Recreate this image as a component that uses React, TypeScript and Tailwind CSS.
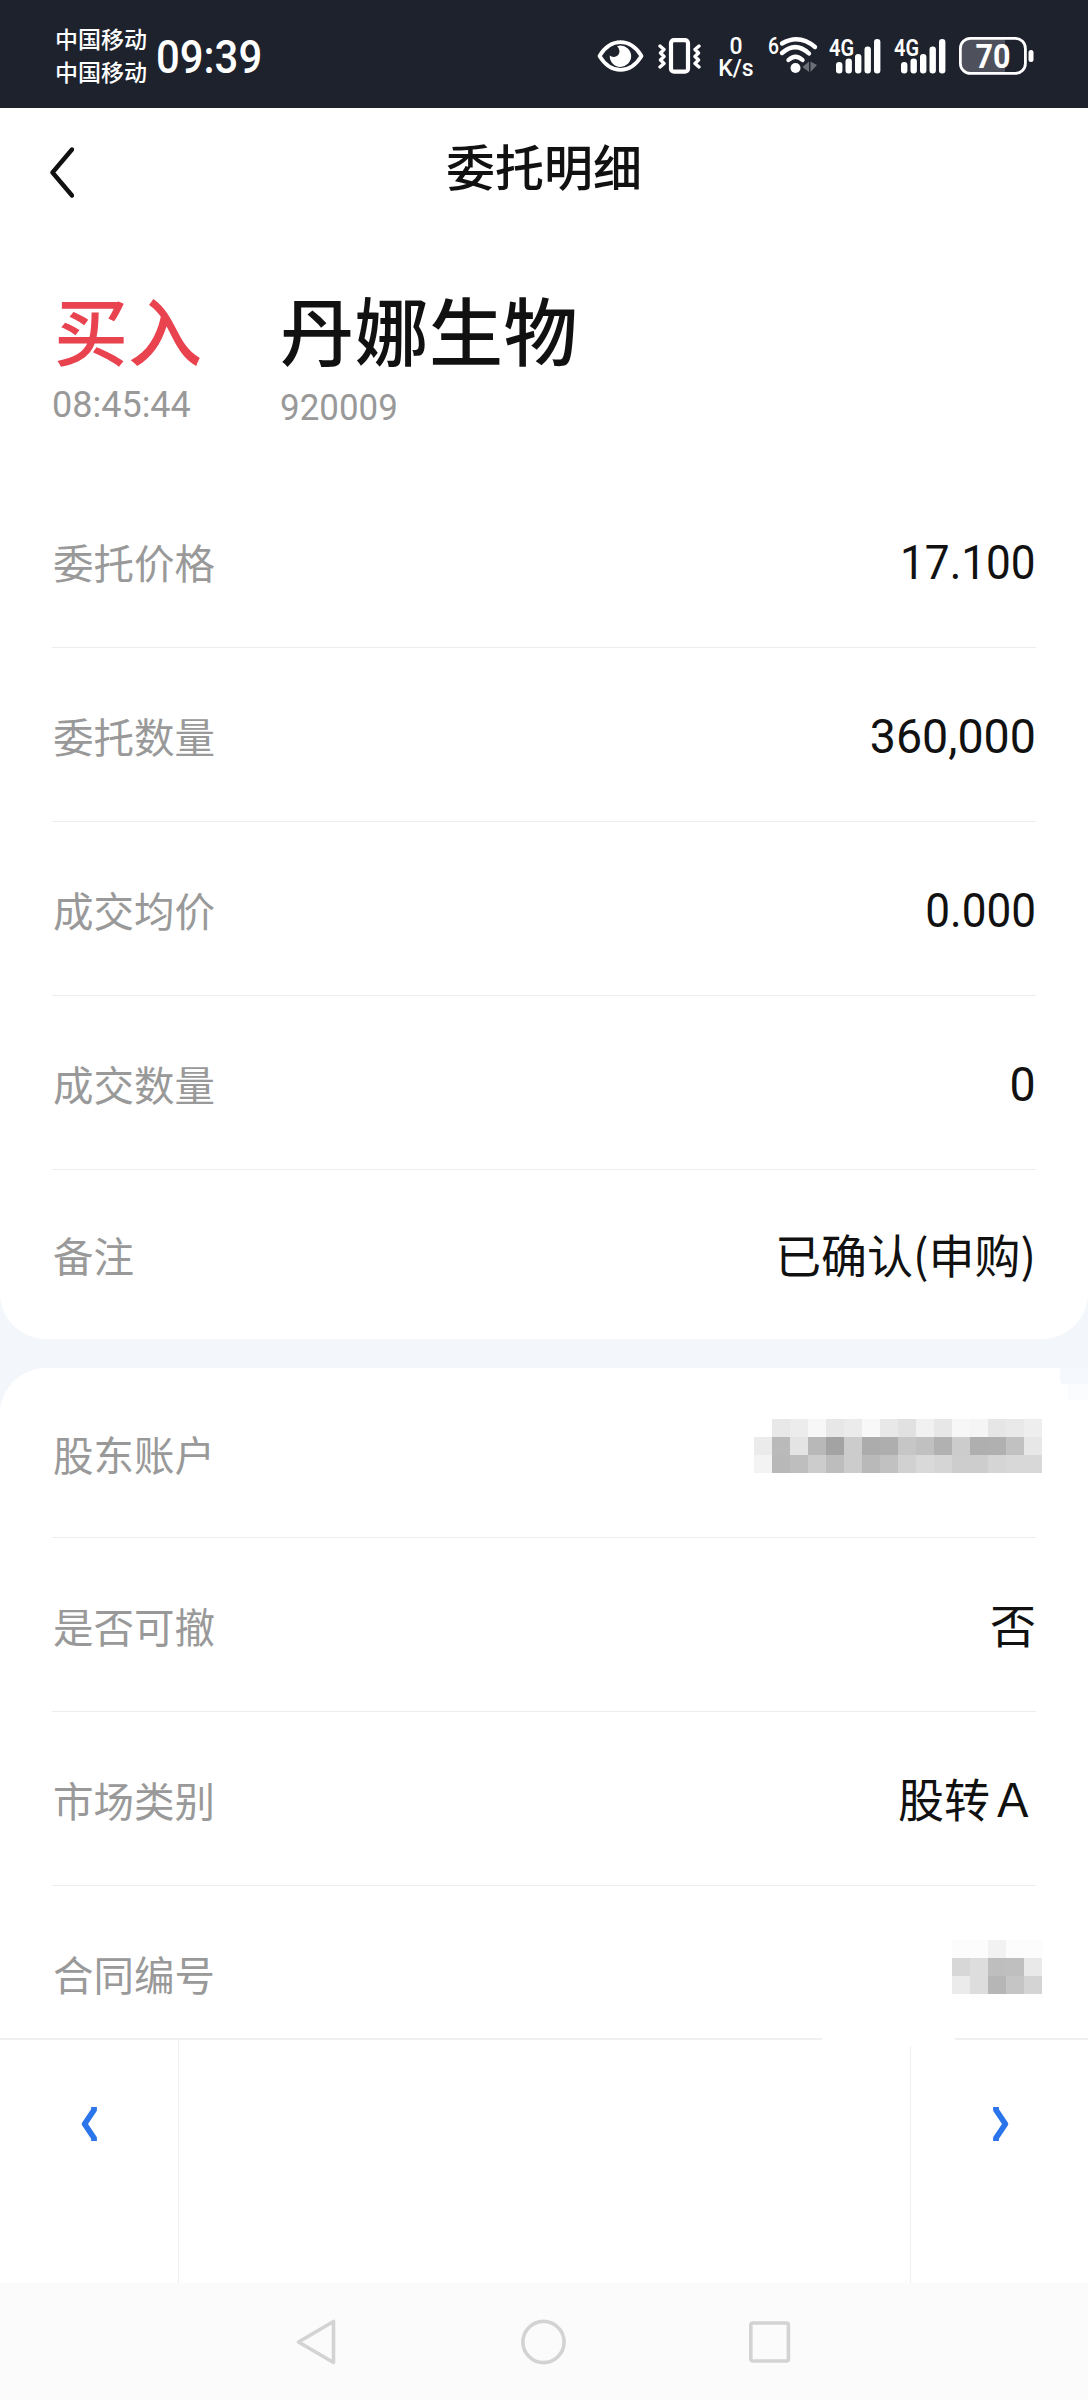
import type { ReactNode } from 'react';

interface RowProps {
  label: string;
  children: ReactNode;
  className?: string;
}

const orderRows = [
  { label: '委托价格', value: '17.100' },
  { label: '委托数量', value: '360,000' },
  { label: '成交均价', value: '0.000' },
  { label: '成交数量', value: '0' },
];

// grey levels of the masked account number, one entry per cell
const accountMask = [
  ['#ffffff', '#e8e8e8', '#ececec', '#f7f7f7', '#e7e7e7', '#ebebeb', '#f8f8f8', '#e8e8e8', '#e1e1e1', '#f1f1f1', '#e7e7e7', '#f7f7f7', '#f5f5f5', '#e6e6e6', '#e9e9e9', '#eeeeee'],
  ['#ebebeb', '#bababa', '#e4e4e4', '#b8b8b8', '#a3a3a3', '#cccccc', '#acacac', '#aeaeae', '#c6c6c6', '#c0c0c0', '#b1b1b1', '#cccccc', '#afafaf', '#b0b0b0', '#c1c1c1', '#e7e7e7'],
  ['#f3f3f3', '#b8b8b8', '#bebebe', '#cccccc', '#bdbdbd', '#cccccc', '#b9b9b9', '#c1c1c1', '#d1d1d1', '#d9d9d9', '#d5d5d5', '#cdcdcd', '#cdcdcd', '#d5d5d5', '#d8d8d8', '#d8d8d8'],
];

const contractMask = [
  ['#fcfcfc', '#fcfcfc', '#f2f2f2', '#fcfcfc', '#fcfcfc'],
  ['#d7d7d7', '#dddddd', '#bebebe', '#bfbfbf', '#e9e9e9'],
  ['#ebebeb', '#dddddd', '#b6b6b6', '#c5c5c5', '#d4d4d4'],
];

function Mosaic({ cells }: Readonly<{ cells: string[][] }>) {
  return (
    <div className="-mr-1.5 -mt-2.5">
      {cells.map((row, y) => (
        <div key={y} className="flex">
          {row.map((color, x) => (
            <div key={x} className="size-[18px]" style={{ backgroundColor: color }} />
          ))}
        </div>
      ))}
    </div>
  );
}

function Row({ label, children, className = 'h-[174px] border-b border-[#ededed]' }: Readonly<RowProps>) {
  return (
    <div className={`flex items-center justify-between ${className}`}>
      <span className="pt-[3px] pl-px text-[40.5px] leading-none text-[#999999]">{label}</span>
      <div className="pb-[3px] text-[46px] leading-none text-[#111111]">{children}</div>
    </div>
  );
}

function Signal() {
  return (
    <svg width="52" height="38" viewBox="0 0 52 38" fill="#fff" className="overflow-visible">
      <text x="0" y="18.5" fontSize="23.5" fontWeight="600" fontFamily="Roboto, sans-serif" textLength="25" lengthAdjust="spacingAndGlyphs">
        4G
      </text>
      <rect x="7" y="25" width="6.4" height="11.5" rx="3" />
      <rect x="16.5" y="21.5" width="6.4" height="15" rx="3" />
      <rect x="26" y="17" width="6.4" height="19.5" rx="3" />
      <rect x="35.5" y="9.5" width="6.4" height="27" rx="3" />
      <rect x="45" y="2" width="6.4" height="34.5" rx="3" />
    </svg>
  );
}

function StatusBar() {
  return (
    <header className="flex h-[108px] items-center bg-[#1e222d] pl-[55px] text-white">
      <div className="mt-px flex w-[101px] flex-col text-[23px] leading-[33px] font-medium">
        <span>中国移动</span>
        <span>中国移动</span>
      </div>
      <div className="mt-1.5 w-[441px]">
        <span className="inline-block origin-left scale-x-[0.91] font-[Roboto] text-[46px] leading-none font-medium">09:39</span>
      </div>
      <svg width="47" height="38" viewBox="0 0 47 38" className="mt-1">
        <path d="M2.5 19C8 10 15 5.2 23.5 5.2S39 10 44.5 19C39 28 32 32.8 23.5 32.8S8 28 2.5 19Z" fill="none" stroke="#fff" strokeWidth="3.8" strokeLinejoin="round" />
        <path d="M23 8.5A10.7 10.7 0 1 1 12.8 18.5Q15 20.5 18 19.8Q22.5 18.5 22.5 14Q22.5 11 20 9.2Z" fill="#fff" />
      </svg>
      <svg width="43" height="38" viewBox="0 0 43 38" fill="none" stroke="#fff" className="mt-1 ml-3.5">
        <rect x="13" y="3.2" width="17" height="31.5" rx="3" strokeWidth="4.2" />
        <path d="M2 9l4 3.5-3.5 3.5L6 19.5 2.5 23 6 26.5 2 30M41 9l-4 3.5 3.5 3.5-3.5 3.5 3.5 3.5-3.5 3.5 4 3.5" strokeWidth="3.4" strokeLinecap="round" strokeLinejoin="round" />
      </svg>
      <div className="mt-2 ml-[18px] flex w-[34px] flex-col items-center font-[Roboto] text-[23px] leading-[22px] font-medium">
        <span>0</span>
        <span>K/s</span>
      </div>
      <svg width="50" height="40" viewBox="0 0 50 40" className="mt-1 ml-[15px] overflow-visible" fill="none" stroke="#fff" strokeWidth="4.4" strokeLinecap="round">
        <text x="0" y="17.5" fontSize="23" fontWeight="500" fontFamily="Roboto, sans-serif" fill="#fff" stroke="none" textLength="11" lengthAdjust="spacingAndGlyphs">
          6
        </text>
        <path d="M14 7.5Q31-2.5 47 11M14 17Q27.5 5 41 17.5M20.5 24Q27.5 17.5 34.5 24" />
        <circle cx="27.5" cy="32" r="5" fill="#fff" stroke="none" />
        <path d="M41 25.5v10.5l-6.5-5zM42.5 25.5v10.5l6.5-7z" fill="#6c6f77" stroke="none" />
      </svg>
      <div className="mt-1 ml-[11px] flex gap-[13px]">
        <Signal />
        <Signal />
      </div>
      <svg width="76" height="38" viewBox="0 0 76 38" className="mt-1 ml-[13px]">
        <path d="M12 2h34v34H12A9 9 0 0 1 3 27V11A9 9 0 0 1 12 2Z" fill="#4e515b" />
        <rect x="1.4" y="1.4" width="65" height="35" rx="10" fill="none" stroke="#fff" strokeWidth="2.8" />
        <rect x="69.5" y="13" width="5" height="12" rx="2.5" fill="#fff" />
        <text x="16.5" y="31" fontSize="34" fontWeight="700" fontFamily="Roboto, sans-serif" fill="#fff" textLength="35" lengthAdjust="spacingAndGlyphs">
          70
        </text>
      </svg>
    </header>
  );
}

function Chevron({ className = '' }: Readonly<{ className?: string }>) {
  return (
    <svg width="16" height="36" viewBox="0 0 16 36" fill="none" className={className}>
      <path d="M13 1v3L3.6 18 13 32v3" stroke="#2b74ea" strokeWidth="5.8" strokeLinejoin="round" />
    </svg>
  );
}

export default function App() {
  return (
    <div className="flex h-[2400px] w-[1088px] flex-col overflow-hidden bg-[#f3f7fb] font-['Noto_Sans_CJK_SC',sans-serif]">
      <StatusBar />

      <section className="h-[1231px] rounded-b-[46px] bg-white px-[52px]">
        <div className="grid h-[120px] grid-cols-[1fr_auto_1fr] items-center">
          <svg width="26" height="52" viewBox="0 0 26 52" fill="none" className="mt-2 -ml-1">
            <path d="M24 3.5L4.5 26.5 24 49.5" stroke="#111" strokeWidth="4.4" strokeLinecap="round" strokeLinejoin="round" />
          </svg>
          <h1 className="pb-2 text-[49px] leading-none font-medium text-[#111111]">委托明细</h1>
        </div>

        <div className="flex h-[246px] pt-[63px]">
          <div className="w-[228px]">
            <p className="pl-0.5 text-[74px] leading-[74px] font-medium text-[#e8434f]">买入</p>
            <p className="mt-[22px] font-[Roboto] text-[36px] leading-none text-[#999999]">08:45:44</p>
          </div>
          <div>
            <p className="text-[74px] leading-[74px] font-medium tracking-[0.5px] text-[#111111]">丹娜生物</p>
            <p className="mt-[25px] origin-left scale-x-[0.97] font-[Roboto] text-[36px] leading-none text-[#999999]">920009</p>
          </div>
        </div>

        {orderRows.map(({ label, value }) => (
          <Row key={label} label={label}>
            <span
              className={`mt-1.5 inline-block origin-right font-[Roboto] text-[49px] leading-none ${
                value.includes('.') ? 'scale-x-[0.9]' : 'scale-x-[0.95]'
              }`}
            >
              {value}
            </span>
          </Row>
        ))}
        <Row label="备注" className="h-[168px]">
          已确认(申购)
        </Row>
      </section>

      <section className="relative mt-[29px] h-[670px] rounded-tl-[46px] bg-white px-[52px]">
        {/* stepped top right corner */}
        <div className="absolute top-0 right-0 h-4 w-7 rounded-bl-sm bg-[#f5f9fd]" />
        <div className="absolute top-4 right-0 h-4 w-5 bg-[#fafcfe]" />
        <Row label="股东账户" className="h-[170px] border-b border-[#ededed]">
          <Mosaic cells={accountMask} />
        </Row>
        <Row label="是否可撤">否</Row>
        <Row label="市场类别">股转Ａ</Row>
        <Row label="合同编号" className="h-[174px]">
          <Mosaic cells={contractMask} />
        </Row>
      </section>

      <div className="relative grid h-[245px] grid-cols-[179px_1fr_178px] border-t-2 border-[#f0f0f0] bg-white">
        <div className="absolute -top-0.5 left-[822px] h-2 w-[133px] bg-white" />
        <div className="flex justify-center border-r border-[#f0f0f0] pt-[66px]">
          <Chevron />
        </div>
        <div />
        <div className="flex justify-center border-l border-[#f0f0f0] pt-[66px] pl-0.5">
          <Chevron className="-scale-x-100" />
        </div>
      </div>

      <nav className="flex h-[117px] items-center gap-[181px] bg-[#fbfbfb] pl-[296px]">
        <svg width="44" height="46" viewBox="0 0 44 46" fill="none" stroke="#d3d3d3" strokeWidth="3.6" strokeLinejoin="round">
          <path d="M37.5 2.5v41L2.5 23z" />
        </svg>
        <svg width="46" height="46" viewBox="0 0 46 46" fill="none" stroke="#d3d3d3" strokeWidth="3.6">
          <circle cx="22.5" cy="23" r="20.6" />
        </svg>
        <svg width="44" height="46" viewBox="0 0 44 46" fill="none" stroke="#d3d3d3" strokeWidth="3.6">
          <rect x="2.8" y="4" width="37.6" height="38" rx="2" />
        </svg>
      </nav>
    </div>
  );
}
